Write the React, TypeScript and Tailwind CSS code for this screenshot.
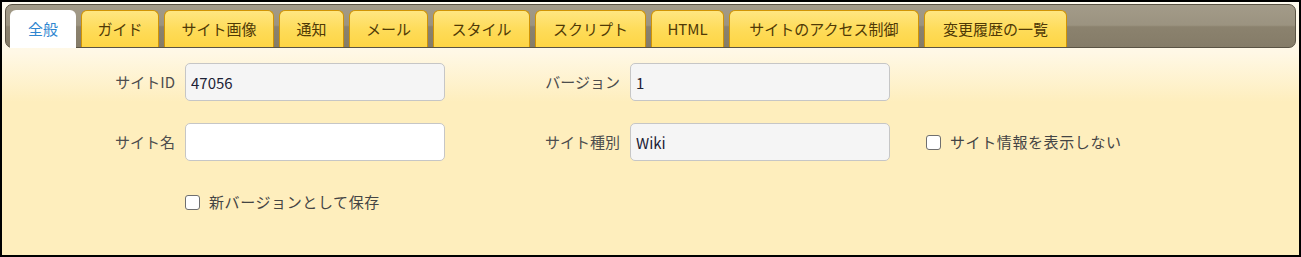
import React, { useState } from 'react';

const tabs = [
    { label: '全般', w: 'w-[66px]' },
    { label: 'ガイド', w: 'w-[78px]' },
    { label: 'サイト画像', w: 'w-[110px]' },
    { label: '通知', w: 'w-[65px]' },
    { label: 'メール', w: 'w-[79px]' },
    { label: 'スタイル', w: 'w-[97px]' },
    { label: 'スクリプト', w: 'w-[111px]' },
    { label: 'HTML', w: 'w-[73px]' },
    { label: 'サイトのアクセス制御', w: 'w-[190px]' },
    { label: '変更履歴の一覧', w: 'w-[143px]' },
];

const fontStack = "font-['Noto_Sans_CJK_JP','Noto_Sans',sans-serif]";

const Check = ({ label, checked, onChange }: { label: string; checked: boolean; onChange: () => void }) => (
    <label className="flex items-center gap-[9px] cursor-pointer">
        <input
            type="checkbox"
            checked={checked}
            onChange={onChange}
            className="appearance-none w-[15px] h-[15px] rounded-[3px] border-[1.5px] border-[#6f6f6f] bg-white checked:bg-[#0074c7] checked:border-[#0074c7]"
        />
        <span className="text-[15px] tracking-[0.6px] text-[#444]">{label}</span>
    </label>
);

const App = () => {
    const [active, setActive] = useState(0);
    const [siteName, setSiteName] = useState('');
    const [hideInfo, setHideInfo] = useState(false);
    const [newVersion, setNewVersion] = useState(false);

    return (
        <div className={`w-[1301px] h-[257px] border-2 border-black bg-[linear-gradient(to_bottom,#fffbef_0px,#fff8e6_50px,#feeebd_100px)] flex flex-col ${fontStack}`}>
            {/* Tab header */}
            <div className="mt-[2px] ml-[3px] mr-[3px] h-[44px] rounded-[7px] border border-[#5a5344] bg-[linear-gradient(to_bottom,#a39b89_0%,#9b9380_48%,#8b826e_52%,#857c68_100%)] flex items-end gap-[5px] pl-[4px]">
                {tabs.map((t, i) => (
                    <button
                        key={t.label}
                        onClick={() => setActive(i)}
                        className={
                            i === active
                                ? `${t.w} h-[38px] -mb-[1px] rounded-t-[6px] bg-white text-[15px] text-[#2f86d0] flex items-center justify-center`
                                : `${t.w} h-[37px] rounded-t-[6px] border border-b-0 border-[#d19405] bg-[linear-gradient(to_bottom,#ffe682_0%,#fedc5a_50%,#fed544_100%)] text-[15px] text-[#4f3906] flex items-center justify-center`
                        }
                    >
                        {t.label}
                    </button>
                ))}
            </div>

            {/* Form */}
            <div className="pt-[15px] grid grid-cols-[173px_260px_165px_260px_1fr] auto-rows-[38px] gap-x-[10px] gap-y-[22px] text-[15px]">
                <div className="flex items-center justify-end text-[#4d4d4d]">サイトID</div>
                <input
                    readOnly
                    value="47056"
                    className="h-[38px] rounded-[5px] border border-[#c6c6c6] bg-[#f5f5f5] px-[5px] text-[15px] text-[#1d2235] outline-none"
                />
                <div className="flex items-center justify-end text-[#4d4d4d]">バージョン</div>
                <input
                    readOnly
                    value="1"
                    className="h-[38px] rounded-[5px] border border-[#c6c6c6] bg-[#f5f5f5] px-[5px] text-[15px] text-[#1d2235] outline-none"
                />
                <div />

                <div className="flex items-center justify-end text-[#4d4d4d]">サイト名</div>
                <input
                    value={siteName}
                    onChange={e => setSiteName(e.target.value)}
                    className="h-[38px] rounded-[5px] border border-[#c6c6c6] bg-white px-[5px] text-[15px] text-[#1d2235] outline-none"
                />
                <div className="flex items-center justify-end text-[#4d4d4d]">サイト種別</div>
                <input
                    readOnly
                    value="Wiki"
                    className="h-[38px] rounded-[5px] border border-[#c6c6c6] bg-[#f5f5f5] px-[5px] text-[15px] text-[#1d2235] outline-none"
                />
                <div className="flex items-center pl-[26px]">
                    <Check label="サイト情報を表示しない" checked={hideInfo} onChange={() => setHideInfo(!hideInfo)} />
                </div>

                <div />
                <div className="flex items-center">
                    <Check label="新バージョンとして保存" checked={newVersion} onChange={() => setNewVersion(!newVersion)} />
                </div>
            </div>
        </div>
    );
};

export default App;
